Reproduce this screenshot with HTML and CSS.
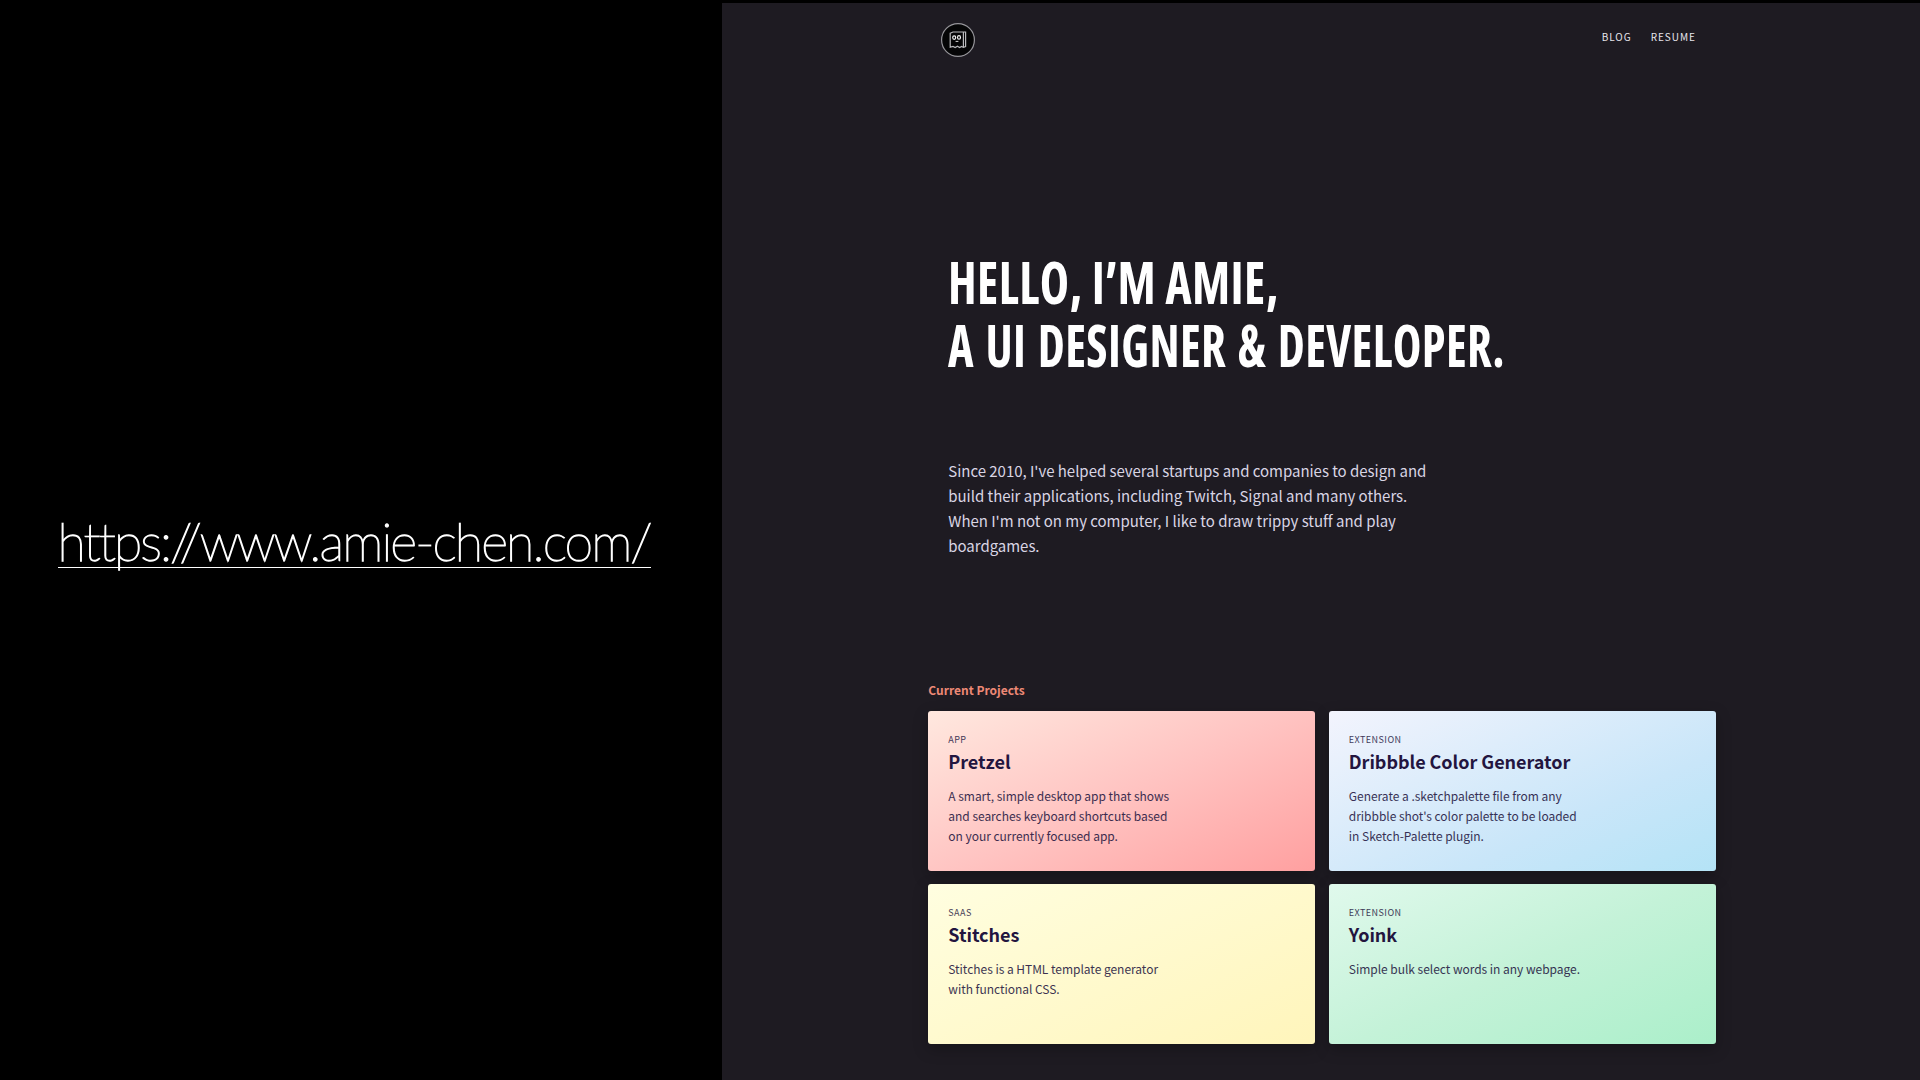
FILE: index.html
```html
<!DOCTYPE html>
<html lang="en">
<head>
<meta charset="utf-8">
<title>Amie Chen</title>
<link rel="stylesheet" href="styles.css">
</head>
<body>
<aside class="panel">
  <a class="url">https://www.amie-chen.com/</a>
</aside>
<main class="site">
  <header class="top">
    <svg class="logo" viewBox="0 0 36 36" width="36" height="36">
      <circle cx="18" cy="18" r="16.4" fill="#050506" stroke="#96959a" stroke-width="1.2"/>
      <path d="M10.2 11.2 L13 10 H25.6 V24.6 L23.4 25.4 L21.6 24.4 L19.6 25.6 L17.4 24.3 L15.2 25.5 L13 24.4 L10.2 25.2 Z M23.4 10.4 V25" fill="none" stroke="#b9b9bc" stroke-width="1.2"/>
      <ellipse cx="14.2" cy="15.6" rx="1.5" ry="1.8" fill="none" stroke="#f2f2f2" stroke-width="1.2"/>
      <ellipse cx="19" cy="15.4" rx="1.5" ry="1.8" fill="none" stroke="#f2f2f2" stroke-width="1.2"/>
      <path d="M15.6 19.4 H18.4" stroke="#d5d5d5" stroke-width="1"/>
    </svg>
    <nav class="links"><a>BLOG</a><a>RESUME</a></nav>
  </header>
  <h1 class="hero"><span class="hero-line first">HELLO, I’M AMIE,</span><span class="hero-line second">A UI DESIGNER &amp; DEVELOPER.</span></h1>
  <p class="intro">Since 2010, I've helped several startups and companies to design and<br>build their applications, including Twitch, Signal and many others.<br>When I'm not on my computer, I like to draw trippy stuff and play<br>boardgames.</p>
  <section class="projects">
    <h2 class="label">Current Projects</h2>
    <div class="grid">
      <article class="card pink"><div class="kind">APP</div><h3 class="name">Pretzel</h3><p class="desc">A smart, simple desktop app that shows<br>and searches keyboard shortcuts based<br>on your currently focused app.</p></article>
      <article class="card blue"><div class="kind">EXTENSION</div><h3 class="name">Dribbble Color Generator</h3><p class="desc">Generate a .sketchpalette file from any<br>dribbble shot's color palette to be loaded<br>in Sketch-Palette plugin.</p></article>
      <article class="card yellow"><div class="kind">SAAS</div><h3 class="name">Stitches</h3><p class="desc">Stitches is a HTML template generator<br>with functional CSS.</p></article>
      <article class="card green"><div class="kind">EXTENSION</div><h3 class="name">Yoink</h3><p class="desc">Simple bulk select words in any webpage.</p></article>
    </div>
  </section>
</main>
</body>
</html>
```
FILE: styles.css
```css
* { box-sizing: border-box; margin: 0; padding: 0; }
body {
  display: flex;
  width: 1920px;
  height: 1080px;
  overflow: hidden;
  background: #000;
  font-family: "Noto Sans CJK JP", "Noto Sans", sans-serif;
}
.panel { flex: 0 0 721.5px; padding: 505px 0 0 57.5px; }
.url {
  display: block;
  width: 593.5px;
  height: 63px;
  border-bottom: 1px solid #fff;
  color: #fff;
  font: 100 52px/73px Lato, sans-serif;
  letter-spacing: -1.9px;
  white-space: nowrap;
  font-variant-ligatures: none;
  -webkit-text-stroke: 1.3px #fff;
}
.site {
  flex: 1;
  margin-top: 3px;
  padding-left: 206.8px;
  background: #1e1b22;
}
.top {
  display: flex;
  justify-content: space-between;
  width: 767.5px;
  height: 60px;
  padding: 18.7px 0 0 12px;
}
.links {
  display: flex;
  gap: 19.2px;
  padding-top: 5px;
  font-size: 10px;
  line-height: 20px;
  letter-spacing: 0.95px;
  color: #e6e5ec;
}
.hero {
  padding: 187px 0 0 20px;
  font: 700 59.5px/62.7px "Open Sans", sans-serif;
  font-stretch: 75%;
  color: #fff;
}
.hero-line {
  display: block;
  width: max-content;
  white-space: nowrap;
  transform-origin: 0 50%;
}
.first { letter-spacing: 0.5px; transform: scaleX(0.832); }
.second { letter-spacing: 0.5px; word-spacing: 3px; transform: scaleX(0.814); }
.intro {
  margin-top: 82.8px;
  padding-left: 20px;
  font-size: 15px;
  line-height: 25px;
  letter-spacing: -0.03px;
  color: #d9d5e4;
}
.projects { margin-top: 121.6px; }
.label { font-size: 12px; line-height: 20px; color: #ed8976; }
.grid {
  display: grid;
  grid-template-columns: 387px 387px;
  grid-auto-rows: 160px;
  gap: 13.5px;
  margin-top: 11px;
}
.card {
  padding: 22px 20px;
  border-radius: 3px;
  color: #23153f;
  box-shadow: 0 5px 15px rgba(0, 0, 0, 0.25);
}
.pink { background: linear-gradient(155deg, #ffe8df, #ffc4c2 50%, #ffa0a0); }
.blue { background: linear-gradient(155deg, #f3f4fd, #c9e6f9 65%, #b4e3f6); }
.yellow { background: linear-gradient(155deg, #fffee0, #fff5bb); }
.green { background: linear-gradient(155deg, #e0f9ec, #c4f2d8 50%, #abefca); }
.kind { font-size: 9px; line-height: 14px; letter-spacing: 0.45px; opacity: 0.85; }
.name { margin-top: 0.9px; font-size: 18px; line-height: 26px; letter-spacing: -0.04px; }
.desc { margin-top: 12.2px; font-size: 12px; line-height: 20px; letter-spacing: -0.03px; opacity: 0.88; white-space: nowrap; }
```
